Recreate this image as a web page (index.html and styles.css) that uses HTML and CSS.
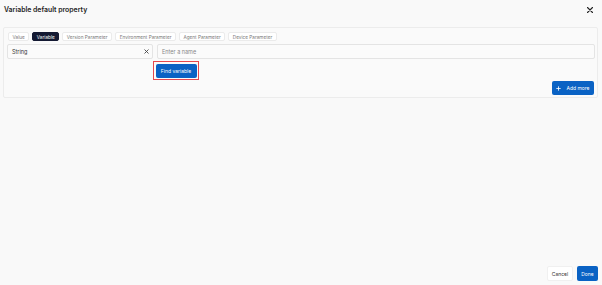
FILE: index.html
```html
<!DOCTYPE html>
<html lang="en">
    <head>
        <meta charset="utf-8">
        <title>Variable default property</title>
        <link rel="stylesheet" href="styles.css">
    </head>
    <body>
        <div class="dialog">
            <div class="dialog-header">
                <span class="dialog-title">Variable default property</span>
                <button class="close-btn" aria-label="Close">
                    <svg width="6" height="6" viewBox="0 0 6 6"><path d="M0.5 0.5L5.5 5.5M5.5 0.5L0.5 5.5" stroke="#222" stroke-width="1.1" stroke-linecap="round"/></svg>
                </button>
            </div>
            <div class="panel">
                <div class="tabs">
                    <span class="tab">Value</span>
                    <span class="tab active">Variable</span>
                    <span class="tab">Version Parameter</span>
                    <span class="tab">Environment Parameter</span>
                    <span class="tab">Agent Parameter</span>
                    <span class="tab">Device Parameter</span>
                </div>
                <div class="field-row">
                    <div class="select-box">
                        <span>String</span>
                        <svg width="5" height="5" viewBox="0 0 5 5"><path d="M0.5 0.5L4.5 4.5M4.5 0.5L0.5 4.5" stroke="#444" stroke-width="0.9"/></svg>
                    </div>
                    <div class="name-input">Enter a name</div>
                </div>
                <div class="find-row">
                    <div class="highlight">
                        <button class="btn btn-primary find-btn">Find variable</button>
                    </div>
                </div>
                <div class="add-row">
                    <button class="btn btn-primary add-btn">
                        <svg width="5" height="5" viewBox="0 0 5 5"><path d="M2.5 0.3V4.7M0.3 2.5H4.7" stroke="#fff" stroke-width="0.8"/></svg>
                        Add more
                    </button>
                </div>
            </div>
            <div class="dialog-footer">
                <button class="btn btn-plain">Cancel</button>
                <button class="btn btn-primary">Done</button>
            </div>
        </div>
    </body>
</html>
```

FILE: styles.css
```css
html, body {
    margin: 0;
    padding: 0;
    height: 100%;
}
body {
    background: #f9f9f9;
    font-family: Inter, "Noto Sans", sans-serif;
    color: #222;
    font-size: 6px;
}
button {
    font-family: inherit;
    border: none;
    cursor: pointer;
    padding: 0;
}
.dialog {
    height: 100%;
    display: flex;
    flex-direction: column;
    box-sizing: border-box;
}
.dialog-header {
    display: flex;
    justify-content: space-between;
    align-items: center;
    padding: 2px 9px 0 4px;
    height: 14px;
}
.dialog-title {
    font-size: 6.9px;
    font-weight: 600;
    color: #1e1e1e;
}
.close-btn {
    background: none;
    display: flex;
    margin-top: 1px;
}
/* 面板 */
.panel {
    margin: 11px 4px 0 3px;
    border: 1px solid #ececec;
    border-radius: 2px;
    background: #fafafa;
    padding: 4px 2px 2px 3px;
}
.tabs {
    display: flex;
    gap: 3px;
    margin-left: 1px;
}
.tab {
    height: 9px;
    line-height: 8px;
    padding: 0 3.5px;
    font-size: 4.7px;
    color: #777;
    background: #fff;
    border: 1px solid #ebebeb;
    border-radius: 2px;
    box-sizing: border-box;
}
.tab.active {
    background: #141a33;
    border-color: #141a33;
    color: #fff;
}
.field-row {
    display: flex;
    gap: 4px;
    margin-top: 3px;
}
.select-box, .name-input {
    height: 15px;
    box-sizing: border-box;
    border: 1px solid #e4e4e4;
    border-radius: 2px;
    background: #fbfbfb;
    font-size: 5.5px;
    display: flex;
    align-items: center;
    padding: 0 4px;
}
.select-box {
    width: 146px;
    justify-content: space-between;
    color: #333;
    padding-right: 3px;
}
.name-input {
    flex: 1;
    color: #888;
}
.find-row {
    margin: 2px 0 0 146px;
    display: flex;
}
.highlight {
    display: flex;
    border: 1.5px solid #e5484d;
    padding: 1.5px;
}
.btn {
    height: 15px;
    font-size: 5px;
    border-radius: 2px;
    padding: 0 5px;
}
.btn-primary {
    background: #0a62c4;
    color: #fff;
}
.find-btn {
    height: 14px;
    width: 41px;
    padding: 0;
}
.add-row {
    display: flex;
    justify-content: flex-end;
    margin: 1px 1px 0 0;
}
.add-btn {
    height: 14px;
    width: 42px;
    padding: 0;
    display: flex;
    align-items: center;
    justify-content: center;
    gap: 5px;
}
.dialog-footer {
    margin-top: auto;
    display: flex;
    justify-content: flex-end;
    gap: 4px;
    padding: 0 4px 4px 0;
}
.btn-plain {
    background: #fff;
    color: #333;
    width: 26px;
    padding: 0;
    border: 1px solid #f0f0f0;
}
.dialog-footer .btn-primary {
    width: 21px;
    padding: 0;
}
```
